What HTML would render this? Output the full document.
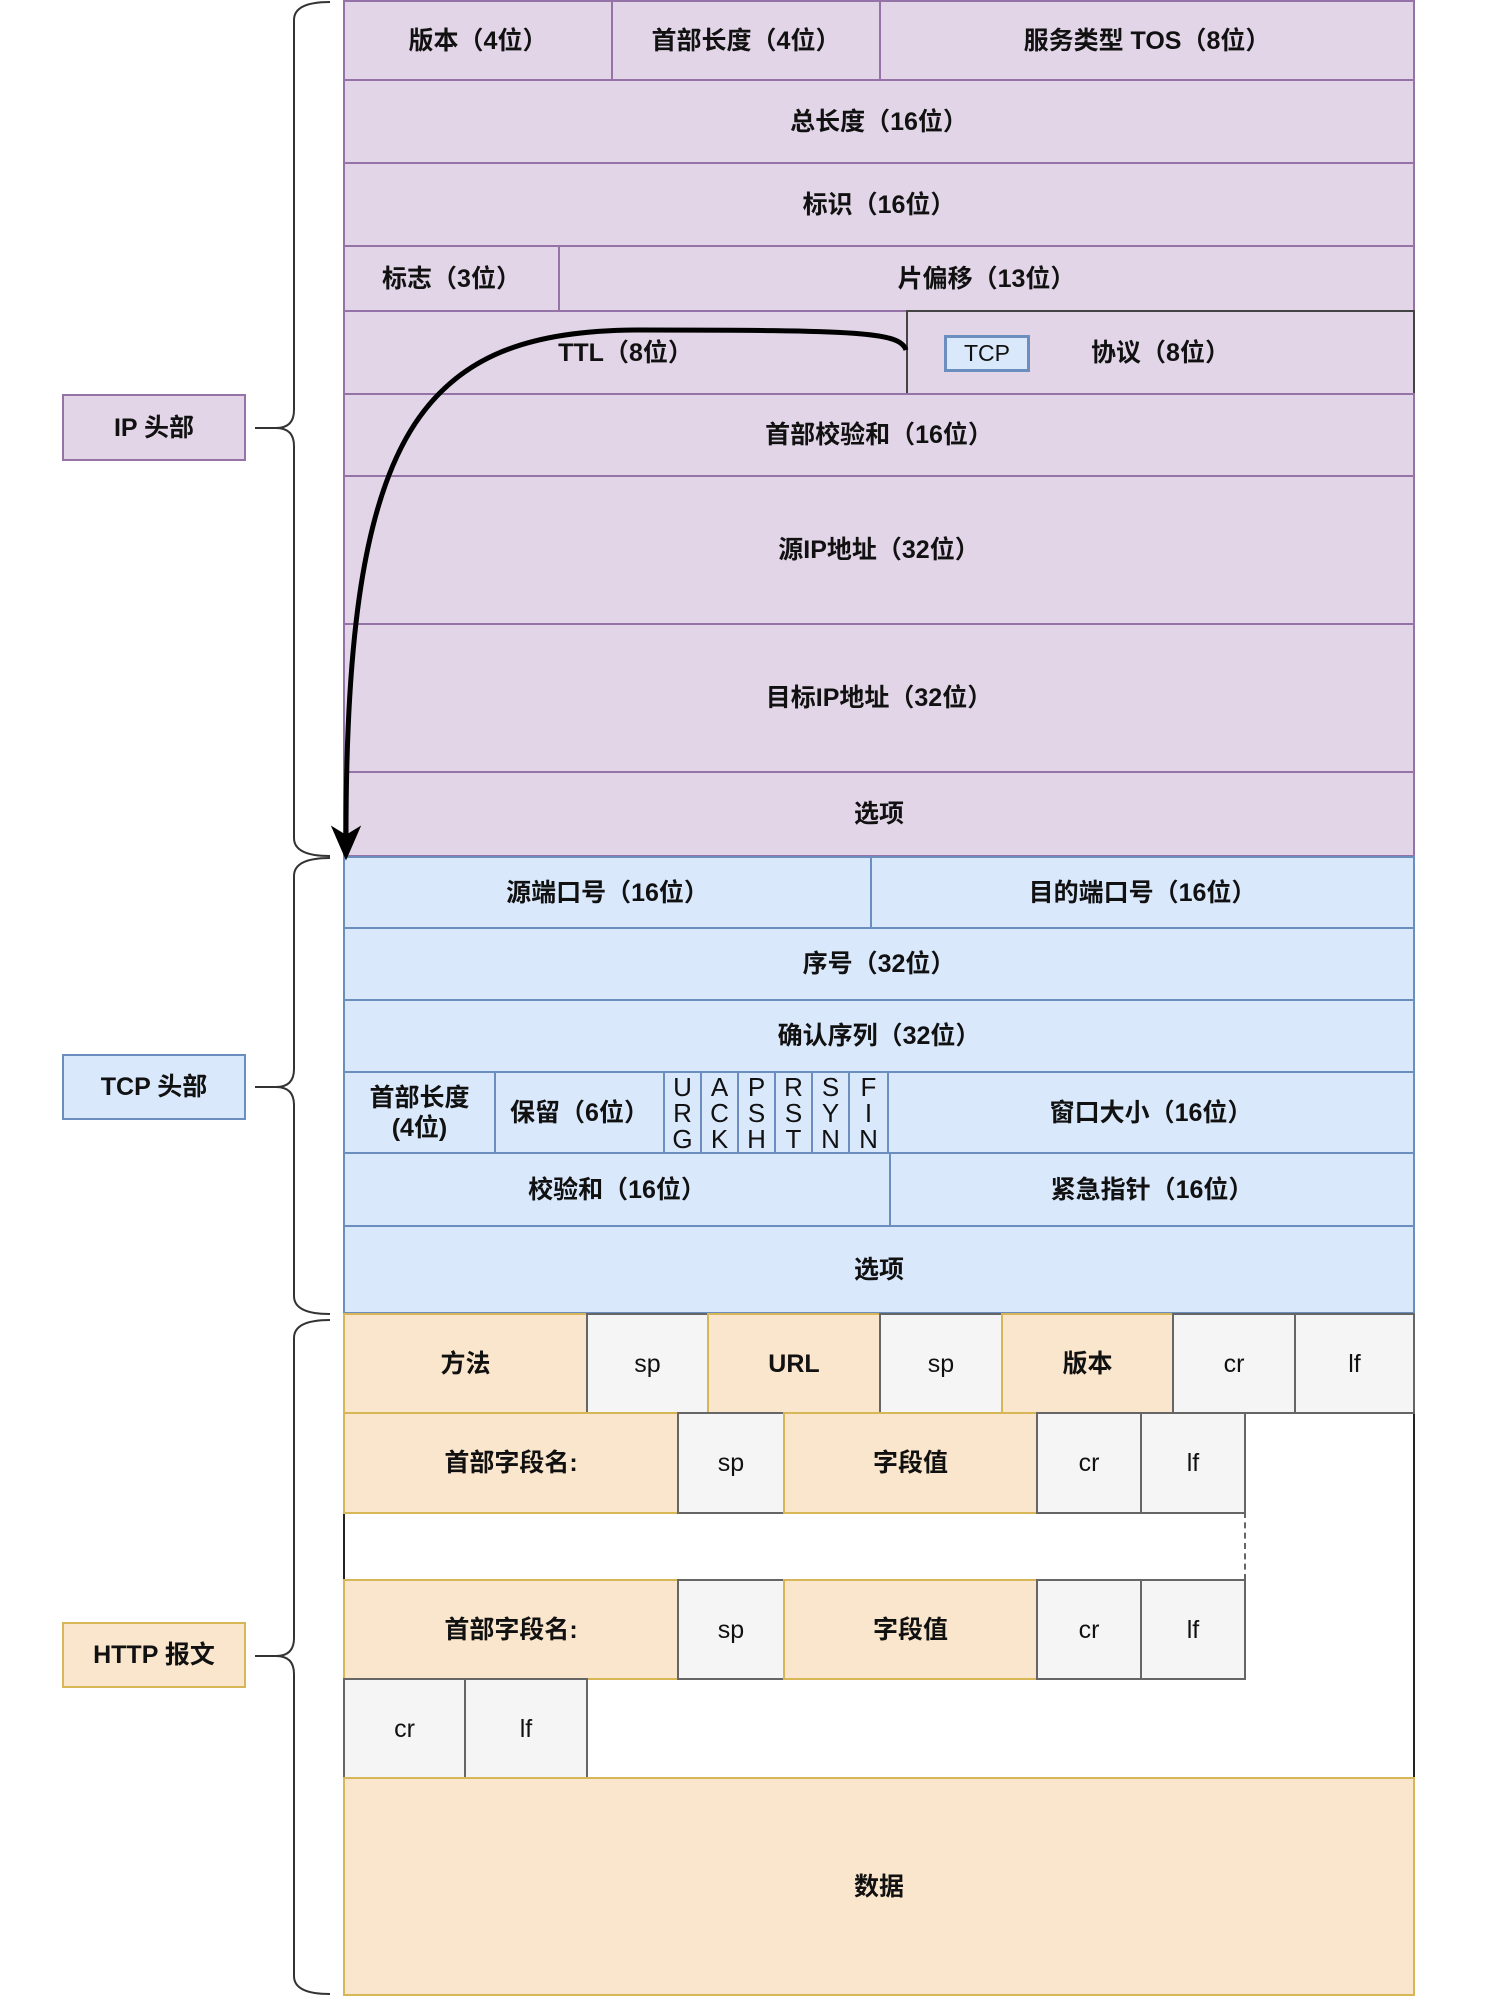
<!DOCTYPE html>
<html><head><meta charset="utf-8"><style>
body{margin:0;width:1496px;height:1996px;background:#fff;position:relative;overflow:hidden;font-family:"Liberation Sans","Noto Sans CJK SC",sans-serif;}
.c{position:absolute;box-sizing:border-box;display:flex;align-items:center;justify-content:center;font-size:25px;font-weight:bold;color:#111;text-align:center;line-height:1.2}
.p{background:#e1d5e7;border:2.5px solid #9673a6}
.b{background:#dae8fc;border:2.5px solid #6c8ebf}
.o{background:#fae6cc;border:2.5px solid #d6b656}
.g{background:#f5f5f5;border:2.5px solid #666;font-weight:normal}
.f{font-weight:normal;font-size:26px;line-height:1.0}
</style></head><body>
<!-- IP -->
<div class="c p" style="left:343px;top:0;width:270px;height:81px">版本（4位）</div>
<div class="c p" style="left:611px;top:0;width:270px;height:81px">首部长度（4位）</div>
<div class="c p" style="left:879px;top:0;width:536px;height:81px">服务类型 TOS（8位）</div>
<div class="c p" style="left:343px;top:79px;width:1072px;height:85px">总长度（16位）</div>
<div class="c p" style="left:343px;top:162px;width:1072px;height:85px">标识（16位）</div>
<div class="c p" style="left:343px;top:245px;width:217px;height:67px">标志（3位）</div>
<div class="c p" style="left:558px;top:245px;width:857px;height:67px">片偏移（13位）</div>
<div class="c p" style="left:343px;top:310px;width:565px;height:85px">TTL（8位）</div>
<div class="c p" style="left:906px;top:310px;width:509px;height:85px;border-color:#444"><span style="margin-left:0px">协议（8位）</span></div>
<div class="c b" style="left:944px;top:335px;width:86px;height:37px;font-weight:normal;font-size:23px;border:3px solid #6c8ebf">TCP</div>
<div class="c p" style="left:343px;top:393px;width:1072px;height:84px">首部校验和（16位）</div>
<div class="c p" style="left:343px;top:475px;width:1072px;height:150px">源IP地址（32位）</div>
<div class="c p" style="left:343px;top:623px;width:1072px;height:150px">目标IP地址（32位）</div>
<div class="c p" style="left:343px;top:771px;width:1072px;height:86px">选项</div>
<!-- TCP -->
<div class="c b" style="left:343px;top:856px;width:529px;height:73px">源端口号（16位）</div>
<div class="c b" style="left:870px;top:856px;width:545px;height:73px">目的端口号（16位）</div>
<div class="c b" style="left:343px;top:927px;width:1072px;height:74px">序号（32位）</div>
<div class="c b" style="left:343px;top:999px;width:1072px;height:74px">确认序列（32位）</div>
<div class="c b" style="left:343px;top:1071px;width:153px;height:83px">首部长度<br>(4位)</div>
<div class="c b" style="left:494px;top:1071px;width:171px;height:83px">保留（6位）</div>
<div class="c b f" style="left:663px;top:1071px;width:39px;height:83px">U<br>R<br>G</div>
<div class="c b f" style="left:700px;top:1071px;width:39px;height:83px">A<br>C<br>K</div>
<div class="c b f" style="left:737px;top:1071px;width:39px;height:83px">P<br>S<br>H</div>
<div class="c b f" style="left:774px;top:1071px;width:39px;height:83px">R<br>S<br>T</div>
<div class="c b f" style="left:811px;top:1071px;width:39px;height:83px">S<br>Y<br>N</div>
<div class="c b f" style="left:848px;top:1071px;width:41px;height:83px">F<br>I<br>N</div>
<div class="c b" style="left:887px;top:1071px;width:528px;height:83px">窗口大小（16位）</div>
<div class="c b" style="left:343px;top:1152px;width:548px;height:75px">校验和（16位）</div>
<div class="c b" style="left:889px;top:1152px;width:526px;height:75px">紧急指针（16位）</div>
<div class="c b" style="left:343px;top:1225px;width:1072px;height:89px">选项</div>
<!-- HTTP -->
<div style="position:absolute;left:343px;top:1410px;width:1072px;height:370px;border-left:2.5px solid #222;border-right:2.5px solid #222;box-sizing:border-box"></div>
<div style="position:absolute;left:1244px;top:1512px;height:68px;border-left:2px dashed #666"></div>
<div class="c o" style="left:343px;top:1313px;width:245px;height:101px">方法</div>
<div class="c g" style="left:586px;top:1313px;width:123px;height:101px">sp</div>
<div class="c o" style="left:707px;top:1313px;width:174px;height:101px">URL</div>
<div class="c g" style="left:879px;top:1313px;width:124px;height:101px">sp</div>
<div class="c o" style="left:1001px;top:1313px;width:173px;height:101px">版本</div>
<div class="c g" style="left:1172px;top:1313px;width:124px;height:101px">cr</div>
<div class="c g" style="left:1294px;top:1313px;width:121px;height:101px">lf</div>
<div class="c o" style="left:343px;top:1412px;width:336px;height:102px">首部字段名:</div>
<div class="c g" style="left:677px;top:1412px;width:108px;height:102px">sp</div>
<div class="c o" style="left:783px;top:1412px;width:255px;height:102px">字段值</div>
<div class="c g" style="left:1036px;top:1412px;width:106px;height:102px">cr</div>
<div class="c g" style="left:1140px;top:1412px;width:106px;height:102px">lf</div>
<div class="c o" style="left:343px;top:1579px;width:336px;height:101px">首部字段名:</div>
<div class="c g" style="left:677px;top:1579px;width:108px;height:101px">sp</div>
<div class="c o" style="left:783px;top:1579px;width:255px;height:101px">字段值</div>
<div class="c g" style="left:1036px;top:1579px;width:106px;height:101px">cr</div>
<div class="c g" style="left:1140px;top:1579px;width:106px;height:101px">lf</div>
<div class="c g" style="left:343px;top:1678px;width:123px;height:101px">cr</div>
<div class="c g" style="left:464px;top:1678px;width:124px;height:101px">lf</div>
<div class="c o" style="left:343px;top:1777px;width:1072px;height:219px">数据</div>
<!-- labels -->
<div class="c p" style="left:62px;top:394px;width:184px;height:67px">IP 头部</div>
<div class="c b" style="left:62px;top:1054px;width:184px;height:66px">TCP 头部</div>
<div class="c o" style="left:62px;top:1622px;width:184px;height:66px">HTTP 报文</div>
<svg style="position:absolute;left:0;top:0" width="1496" height="1996">
<g fill="none" stroke="#333" stroke-width="2">
<path d="M330,2 Q294,2 294,20 L294,410 Q294,428 276,428 L255,428 M276,428 Q294,428 294,446 L294,838 Q294,856 330,856"/>
<path d="M330,858 Q294,858 294,876 L294,1069 Q294,1087 276,1087 L255,1087 M276,1087 Q294,1087 294,1105 L294,1296 Q294,1314 330,1314"/>
<path d="M330,1320 Q294,1320 294,1338 L294,1638 Q294,1656 276,1656 L255,1656 M276,1656 Q294,1656 294,1674 L294,1976 Q294,1994 330,1994"/>
</g>
<path d="M906,350 C900,332 860,330 640,330 C420,330 346,430 346,836" fill="none" stroke="#000" stroke-width="5"/>
<path d="M333,828 L346,858 L359,828 L346,836 Z" fill="#000" stroke="#000" stroke-width="2"/>
</svg>
</body></html>
